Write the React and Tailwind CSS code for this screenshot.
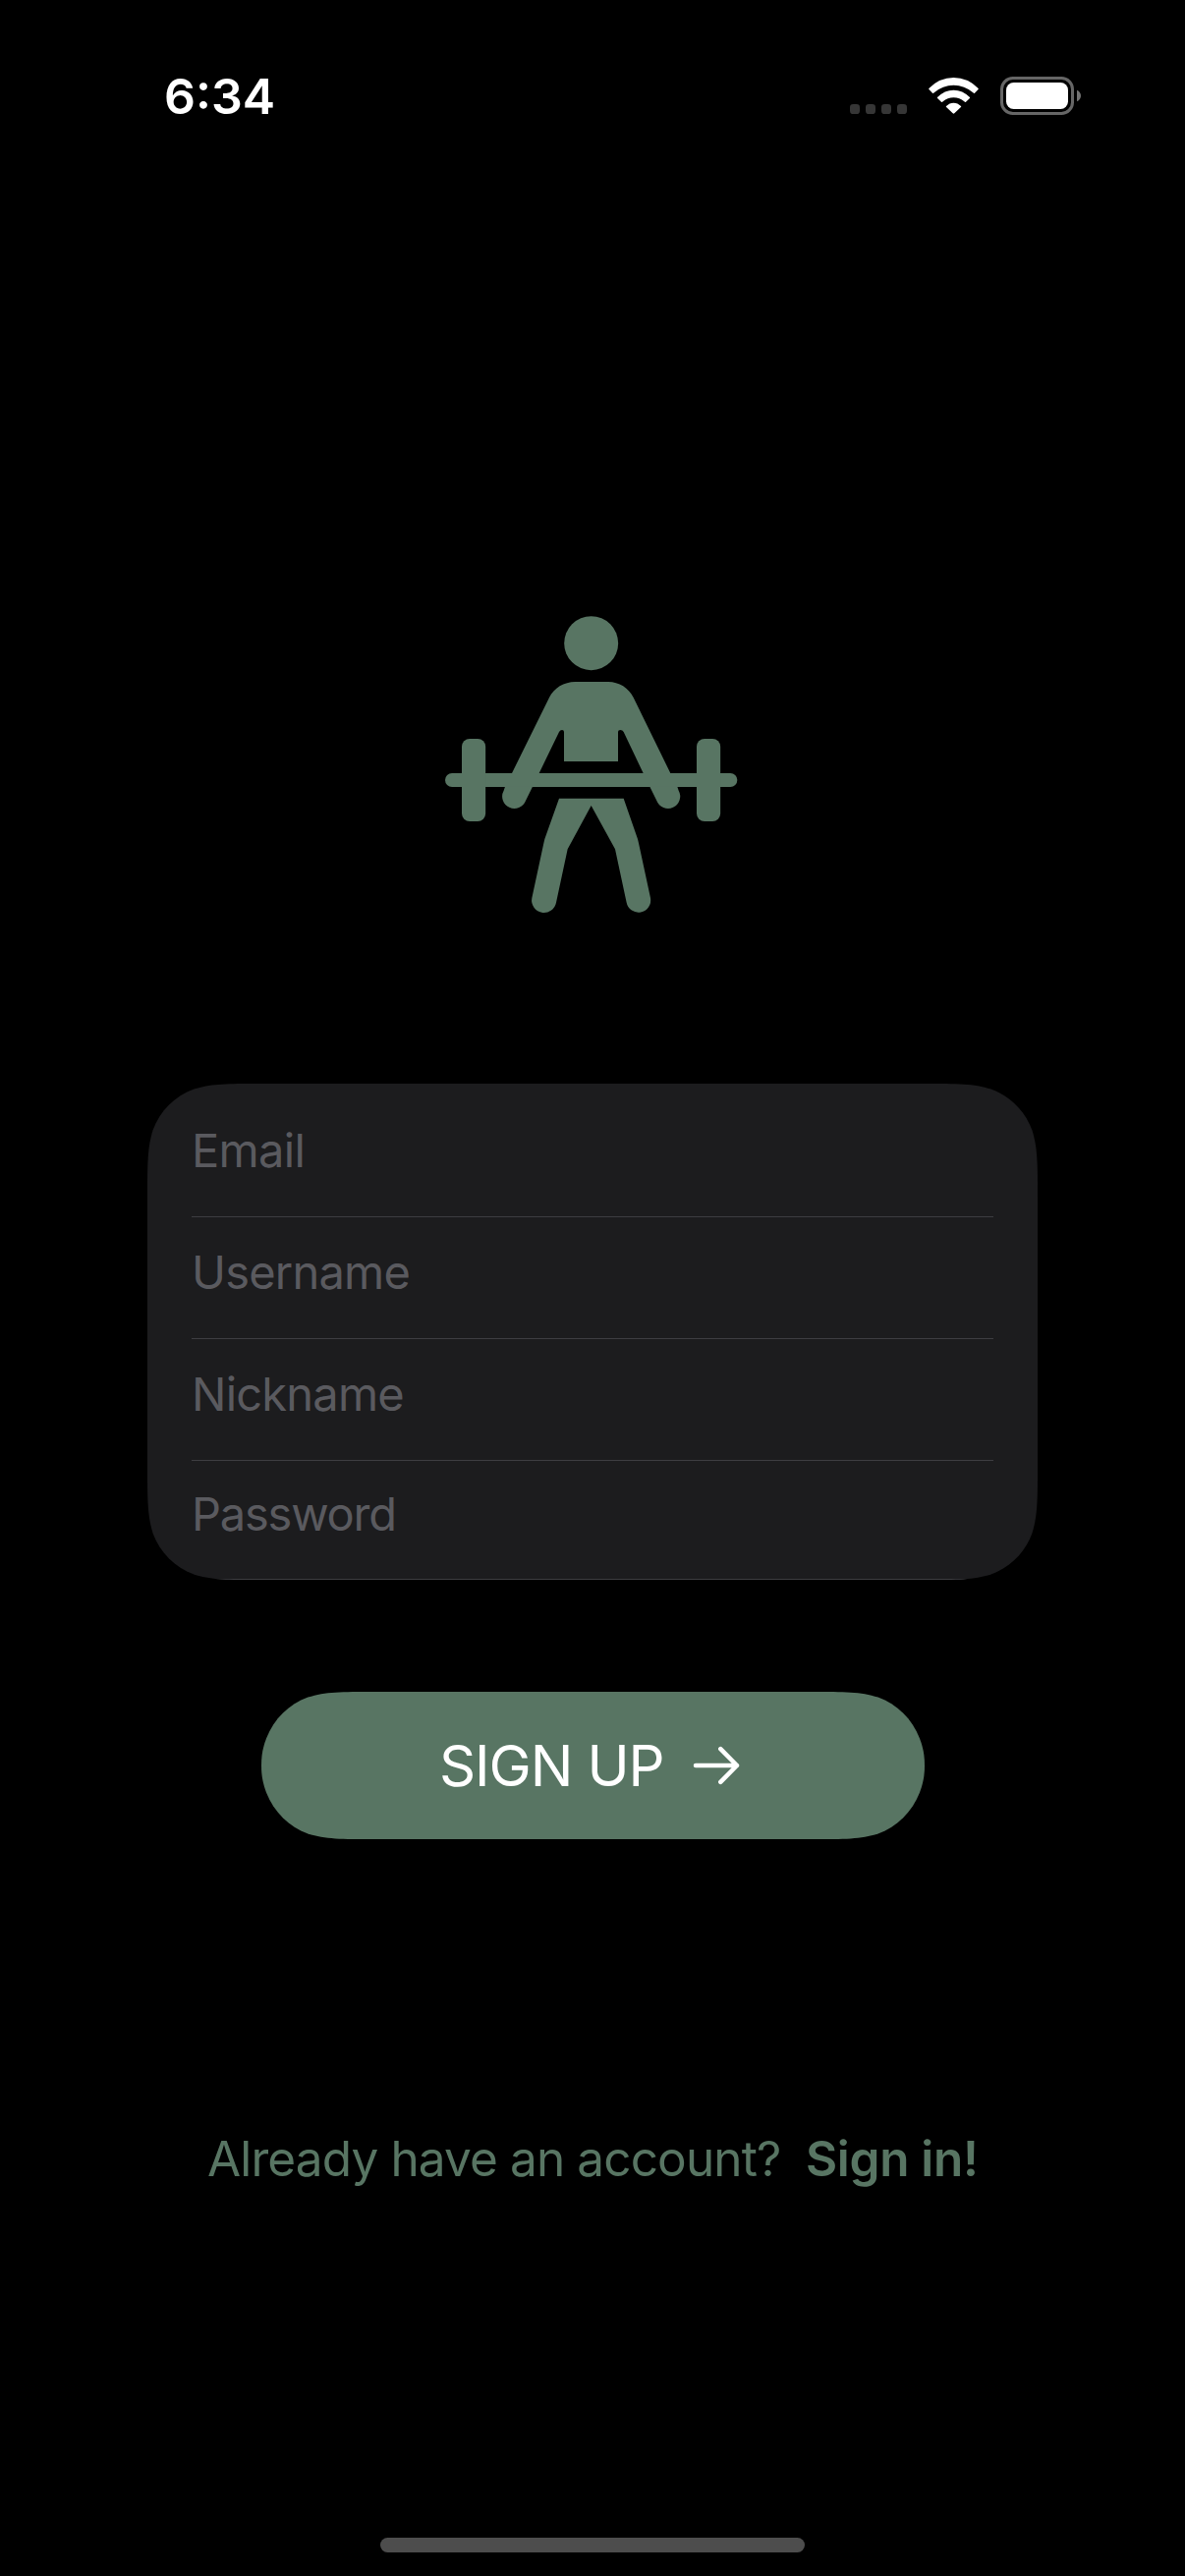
import React from "react";

// Outline of a box with continuous ("squircle") corners.
// When the side is exactly two radii tall, the vertical ends finish as plain arcs.
function smoothBox(w, h, r) {
  const pill = h <= 2 * r;
  const a = 1.52866 * r, b = 1.0885 * r, c = 0.8684 * r;
  const d = 0.6315 * r, e = 0.0749 * r, f = 0.3728 * r, g = 0.16906 * r;
  const s = pill ? 0.068 * r : e;
  const va = pill ? r : a;
  const vb = pill ? 0.85 * r : b;
  const vc = pill ? 0.745 * r : c;
  const vx = pill ? 0.024 * r : 0;
  return [
    `M${a} 0L${w - a} 0`,
    `C${w - b} 0 ${w - c} 0 ${w - d} ${e}`,
    `C${w - f} ${g} ${w - g} ${f} ${w - s} ${d}`,
    `C${w - vx} ${vc} ${w} ${vb} ${w} ${va}`,
    `L${w} ${h - va}`,
    `C${w} ${h - vb} ${w - vx} ${h - vc} ${w - s} ${h - d}`,
    `C${w - g} ${h - f} ${w - f} ${h - g} ${w - d} ${h - e}`,
    `C${w - c} ${h} ${w - b} ${h} ${w - a} ${h}`,
    `L${a} ${h}`,
    `C${b} ${h} ${c} ${h} ${d} ${h - e}`,
    `C${f} ${h - g} ${g} ${h - f} ${s} ${h - d}`,
    `C${vx} ${h - vc} 0 ${h - vb} 0 ${h - va}`,
    `L0 ${va}`,
    `C0 ${vb} ${vx} ${vc} ${s} ${d}`,
    `C${g} ${f} ${f} ${g} ${d} ${e}`,
    `C${c} 0 ${b} 0 ${a} 0Z`,
  ].join("");
}

function StatusIcons() {
  return (
    <svg className="h-[80px] w-[270px]" viewBox="0 0 810 240" aria-hidden="true">
      <g fill="#363636">
        <rect x="45" y="138" width="30" height="30" rx="10" />
        <rect x="93" y="138" width="30" height="30" rx="10" />
        <rect x="141" y="138" width="30" height="30" rx="10" />
        <rect x="189" y="138" width="30" height="30" rx="10" />
      </g>
      <g fill="#fff">
        <path d="M286 90Q318 57 361.500 57T437 90Q438 92 436 94L426 104Q424 106 421 103Q395 80 361.500 80T302 103Q299 106 297 104L287 94Q285 92 286 90Z" />
        <path d="M312 117Q334 95 361.500 95T411 117Q412 119 410 121L399 131Q397 133 394 130Q380 118 361.500 118T329 130Q326 133 324 131L313 121Q311 119 312 117Z" />
        <path d="M339 144Q349 134 361.500 134T384 144Q386 146 383 148L364 166Q361.500 168.500 359 166L340 148Q337 146 339 144Z" />
      </g>
      <rect x="508.500" y="58.500" width="216" height="108" rx="34" fill="none" stroke="#666" strokeWidth="9" />
      <rect x="522" y="72" width="189" height="81" rx="23" fill="#fff" />
      <path d="M738 95Q750 101 750 112.500T738 130Z" fill="#737373" />
    </svg>
  );
}

function Lifter() {
  return (
    <svg className="h-[340px] w-[320px]" viewBox="0 0 960 1020" fill="#587563" aria-hidden="true">
      <circle cx="485" cy="134" r="82.500" />
      <path d="M243 531L357 300C371 271 402 252 436 252H537C570 252 600 271 614 300L727 531H644L584 405Q581 399 574 399Q567 399 567 405V495H402V405Q402 399 396 399Q390 399 387 405L326 531Z" />
      <rect x="39" y="531" width="892" height="42" rx="21" />
      <rect x="90" y="426" width="72.500" height="252" rx="24" />
      <rect x="807" y="426" width="72.500" height="252" rx="24" />
      <path d="M222 572H306L285 615A37 37 0 1 1 218 584Z" />
      <path d="M748 572H664L685 615A37 37 0 1 0 752 584Z" />
      <path d="M387 608H584L627 732L630 745L666 912A37 37 0 0 1 593 926L558 763L485 630L413 763L378 926A37 37 0 0 1 304 912L340 745L343 732Z" />
    </svg>
  );
}

function Arrow() {
  return (
    <svg className="ml-[27px] h-[44px] w-[54px]" viewBox="0 0 54 44" fill="none" stroke="#fff" strokeWidth="4.500" strokeLinecap="round" strokeLinejoin="round" aria-hidden="true">
      <path d="M6 22H48M31.300 5.200L48 22L31.300 38.800" />
    </svg>
  );
}

const fields = [
  { label: "Email", row: "mx-[45px] h-[136px] pt-[28px]", text: "tracking-[-0.7px]" },
  { label: "Username", row: "mx-[45px] h-[124px] pt-[16px]", text: "tracking-[-0.778px]" },
  { label: "Nickname", row: "mx-[45px] h-[124px] pt-[16px]", text: "tracking-[-0.781px]" },
  { label: "Password", row: "pl-[45px] h-[121px] pt-[14px]", text: "tracking-[-1.205px]" },
];

export default function App() {
  return (
    <div className="flex h-[2622px] w-[1206px] flex-col overflow-hidden bg-black font-['Inter',sans-serif] text-white">
      <header className="mt-[60px] flex h-[80px] justify-between pr-[86px] pl-[167px]">
        <span className="mt-[8px] text-[50px] leading-[60px] font-semibold">6:34</span>
        <StatusIcons />
      </header>

      <main className="flex flex-col">
        <div className="mt-[470px] ml-[440px] flex">
          <Lifter />
        </div>

        <form
          className="mt-[153px] ml-[150px] flex h-[505px] w-[906px] flex-col bg-[#1c1c1e]"
          style={{ clipPath: `path("${smoothBox(906, 505, 75)}")` }}
        >
          {fields.map(({ label, row, text }) => (
            <div key={label} className={`${row} ${text} border-b border-[#3d3d41] text-[47px] leading-[80px] text-[#5a5a5f]`}>
              {label}
            </div>
          ))}
        </form>

        <button
          type="button"
          className="mt-[114px] ml-[266px] flex h-[150px] w-[675px] items-center bg-[#587563] pl-[181px]"
          style={{ clipPath: `path("${smoothBox(675, 150, 75)}")` }}
        >
          <span className="text-[58px] leading-[60px] tracking-[-1.12px]">SIGN UP</span>
          <Arrow />
        </button>

        <p className="mt-[295px] flex pl-[211px] text-[49.5px] leading-[60px] whitespace-nowrap text-[#587563]">
          <span className="tracking-[-0.872px]">Already have an account?</span>
          <a className="ml-[25.5px] font-semibold tracking-[-0.3px]">Sign in!</a>
        </p>
      </main>

      <div className="mt-[356px] ml-[387px] h-[15px] w-[432px] rounded-full bg-[#4d4d4d]" />
    </div>
  );
}
